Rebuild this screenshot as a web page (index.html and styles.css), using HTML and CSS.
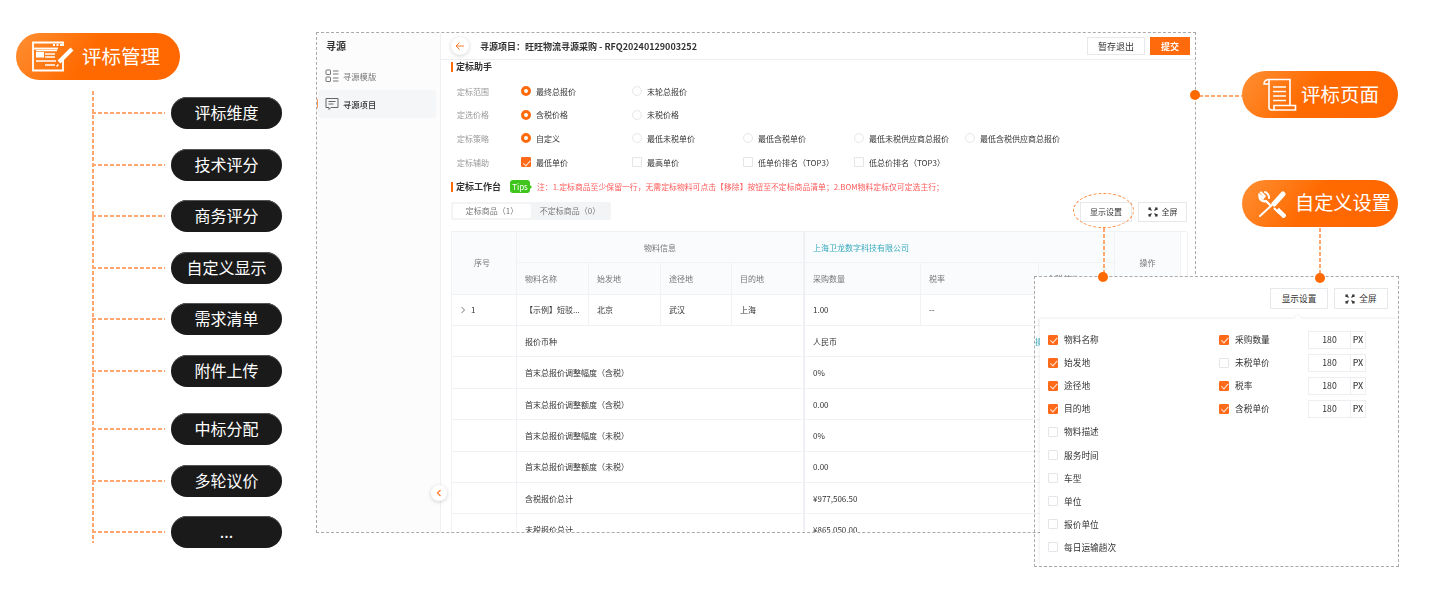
FILE: index.html
```html
<!DOCTYPE html>
<html lang="zh-CN">
<head>
<meta charset="utf-8">
<title>评标管理</title>
<link rel="stylesheet" href="styles.css">
</head>
<body>
<div class="canvas">

  <div class="pill pill-main">
    <svg class="ico-form" viewBox="0 0 44 32" fill="none" stroke="#fff">
      <path d="M31 15V29.500H1V1.500H31V5" stroke-width="1.800"/>
      <path d="M1 7.500H26" stroke-width="1.800"/>
      <path d="M21 4h2M24.500 4h2M28 4h2" stroke-width="1.800"/>
      <rect x="4" y="11" width="8" height="5.500" fill="#fff" stroke="none"/>
      <path d="M4 9.500H25M13 13H23M13 16H23M4 20H24M13 24H23" stroke-width="1.300"/>
      <path d="M27 21 40 8" stroke-width="4"/>
      <path d="M26.500 23.500 24.500 25.500" stroke-width="1.500"/>
    </svg>
    <span class="pill-label">评标管理</span>
  </div>

  <div class="tree">
    <div class="branch"><i class="twig"></i><span class="dark-pill">评标维度</span></div>
    <div class="branch"><i class="twig"></i><span class="dark-pill">技术评分</span></div>
    <div class="branch"><i class="twig"></i><span class="dark-pill">商务评分</span></div>
    <div class="branch"><i class="twig"></i><span class="dark-pill">自定义显示</span></div>
    <div class="branch"><i class="twig"></i><span class="dark-pill">需求清单</span></div>
    <div class="branch"><i class="twig"></i><span class="dark-pill">附件上传</span></div>
    <div class="branch branch-gap"><i class="twig"></i><span class="dark-pill">中标分配</span></div>
    <div class="branch"><i class="twig"></i><span class="dark-pill">多轮议价</span></div>
    <div class="branch"><i class="twig"></i><span class="dark-pill">...</span></div>
  </div>

  <section class="window">
    <aside class="sidebar">
      <h2 class="side-title">寻源</h2>
      <div class="side-item">
        <svg class="side-ico" viewBox="0 0 14 14" fill="none" stroke="#777" stroke-width="1"><rect x="1" y="1" width="4.500" height="4.500" rx=".5"/><rect x="1" y="8" width="4.500" height="4.500" rx=".5"/><path d="M8 2h5.500M8 5h5.500M8 9h5.500M8 12h5.500"/></svg>
        <span>寻源模版</span>
      </div>
      <div class="side-item side-active">
        <svg class="side-ico" viewBox="0 0 14 14" fill="none" stroke="#666" stroke-width="1"><path d="M1 1.500H13V10.500H6L4 12.500V10.500H1Z"/><path d="M3.500 4.500h7M3.500 7h5"/></svg>
        <span>寻源项目</span>
      </div>
    </aside>

    <div class="main">
      <header class="topbar">
        <span class="back"><svg viewBox="0 0 10 10" fill="none" stroke="#ff7a26" stroke-width="1"><path d="M9 5H1M4.500 1.500 1 5l3.500 3.500"/></svg></span>
        <h1 class="title">寻源项目：旺旺物流寻源采购 - RFQ20240129003252</h1>
        <span class="btn btn-save">暂存退出</span>
        <span class="btn btn-submit">提交</span>
      </header>

      <div class="content">
        <h3 class="sec-title">定标助手</h3>
        <div class="form">
          <div class="form-row"><span class="f-label">定标范围</span>
            <span class="opt"><i class="radio on"></i>最终总报价</span>
            <span class="opt"><i class="radio"></i>末轮总报价</span>
          </div>
          <div class="form-row"><span class="f-label">定选价格</span>
            <span class="opt"><i class="radio on"></i>含税价格</span>
            <span class="opt"><i class="radio"></i>未税价格</span>
          </div>
          <div class="form-row"><span class="f-label">定标策略</span>
            <span class="opt"><i class="radio on"></i>自定义</span>
            <span class="opt"><i class="radio"></i>最低未税单价</span>
            <span class="opt"><i class="radio"></i>最低含税单价</span>
            <span class="opt"><i class="radio"></i>最低未税供应商总报价</span>
            <span class="opt"><i class="radio"></i>最低含税供应商总报价</span>
          </div>
          <div class="form-row"><span class="f-label">定标辅助</span>
            <span class="opt"><i class="check on"></i>最低单价</span>
            <span class="opt"><i class="check"></i>最高单价</span>
            <span class="opt"><i class="check"></i>低单价排名（TOP3）</span>
            <span class="opt"><i class="check"></i>低总价排名（TOP3）</span>
          </div>
        </div>

        <div class="bench-head">
          <h3 class="sec-title">定标工作台</h3>
          <span class="tips">Tips</span>
          <span class="note">注：1.定标商品至少保留一行，无需定标物料可点击【移除】按钮至不定标商品清单；2.BOM物料定标仅可定选主行；</span>
        </div>

        <div class="toolbar">
          <div class="tabs"><span class="tab tab-on">定标商品（1）</span><span class="tab">不定标商品（0）</span></div>
          <div class="tools">
            <span class="btn btn-tool">显示设置</span>
            <span class="btn btn-tool btn-full"><svg class="full-ico" viewBox="0 0 10 10" fill="none" stroke="#333" stroke-width="1.100"><path d="M1 3V1H3M7 1H9V3M9 7V9H7M3 9H1V7M1 1 3.500 3.500M9 1 6.500 3.500M9 9 6.500 6.500M1 9 3.500 6.500"/></svg>全屏</span>
          </div>
        </div>

        <div class="grid">
          <div class="c h r2 seq">序号</div>
          <div class="c h cs4 ctr">物料信息</div>
          <div class="c h cs3 teal sup">上海卫龙数字科技有限公司</div>
          <div class="c h r2 ctr op">操作</div>
          <div class="c h blank r2"></div>

          <div class="c h">物料名称</div>
          <div class="c h">始发地</div>
          <div class="c h">途径地</div>
          <div class="c h">目的地</div>
          <div class="c h sup">采购数量</div>
          <div class="c h">税率</div>
          <div class="c h">含税单价</div>

          <div class="c idx"><svg class="chev" viewBox="0 0 6 8" fill="none" stroke="#777"><path d="M1.500 1 4.500 4 1.500 7"/></svg>1</div>
          <div class="c">【示例】短驳...</div>
          <div class="c">北京</div>
          <div class="c">武汉</div>
          <div class="c">上海</div>
          <div class="c sup">1.00</div>
          <div class="c">--</div>
          <div class="c cs3"></div>

          <div class="c"></div><div class="c cs4">报价币种</div><div class="c val sup">人民币<span class="teal link">操作</span></div>
          <div class="c"></div><div class="c cs4">首末总报价调整幅度（含税）</div><div class="c val sup">0%</div>
          <div class="c"></div><div class="c cs4">首末总报价调整额度（含税）</div><div class="c val sup">0.00</div>
          <div class="c"></div><div class="c cs4">首末总报价调整幅度（未税）</div><div class="c val sup">0%</div>
          <div class="c"></div><div class="c cs4">首末总报价调整额度（未税）</div><div class="c val sup">0.00</div>
          <div class="c"></div><div class="c cs4">含税报价总计</div><div class="c val sup">¥977,506.50</div>
          <div class="c"></div><div class="c cs4">未税报价总计</div><div class="c val sup">¥865,050.00</div>
        </div>
      </div>
    </div>
  </section>

  <span class="collapse"><svg viewBox="0 0 6 8" fill="none" stroke="#ff7a26" stroke-width="1.200"><path d="M4.500 1 1.500 4 4.500 7"/></svg></span>

  <span class="callout-ring"></span>
  <i class="link-v link-ring"></i>
  <i class="link-v link-tools"></i>
  <i class="link-h"></i>

  <div class="popup">
    <div class="pop-head">
      <span class="btn btn-pop">显示设置</span>
      <span class="btn btn-pop btn-pop-full"><svg class="full-ico" viewBox="0 0 10 10" fill="none" stroke="#333" stroke-width="1.100"><path d="M1 3V1H3M7 1H9V3M9 7V9H7M3 9H1V7M1 1 3.500 3.500M9 1 6.500 3.500M9 9 6.500 6.500M1 9 3.500 6.500"/></svg>全屏</span>
    </div>
    <div class="panel">
      <div class="pop-col">
        <label class="pop-row"><i class="check on"></i>物料名称</label>
        <label class="pop-row"><i class="check on"></i>始发地</label>
        <label class="pop-row"><i class="check on"></i>途径地</label>
        <label class="pop-row"><i class="check on"></i>目的地</label>
        <label class="pop-row"><i class="check"></i>物料描述</label>
        <label class="pop-row"><i class="check"></i>服务时间</label>
        <label class="pop-row"><i class="check"></i>车型</label>
        <label class="pop-row"><i class="check"></i>单位</label>
        <label class="pop-row"><i class="check"></i>报价单位</label>
        <label class="pop-row"><i class="check"></i>每日运输趟次</label>
      </div>
      <div class="pop-col pop-col-2">
        <div class="pop-row"><i class="check on"></i><span class="pop-name">采购数量</span><span class="num">180</span><span class="unit">PX</span></div>
        <div class="pop-row"><i class="check"></i><span class="pop-name">未税单价</span><span class="num">180</span><span class="unit">PX</span></div>
        <div class="pop-row"><i class="check on"></i><span class="pop-name">税率</span><span class="num">180</span><span class="unit">PX</span></div>
        <div class="pop-row"><i class="check on"></i><span class="pop-name">含税单价</span><span class="num">180</span><span class="unit">PX</span></div>
      </div>
    </div>
  </div>

  <i class="dot dot-page"></i>
  <i class="dot dot-ring"></i>
  <i class="dot dot-tools"></i>

  <div class="pill pill-page">
    <svg class="ico-scroll" viewBox="0 0 34 34" fill="none" stroke="#fff" stroke-width="1.600">
      <path d="M6 1.500H27V27M6 1.500C3 1.500 1 3 1 6H6M6 1.500V29C6 31.500 7 32 8.500 32H32.500V27.500H11V32"/>
      <path d="M10 9H23M10 13.500H23M10 18H23M10 22.500H23" stroke-width="1.700"/>
    </svg>
    <span class="pill-label">评标页面</span>
  </div>

  <div class="pill pill-tools">
    <svg class="ico-tools" viewBox="0 0 28 28" fill="none" stroke="#fff" stroke-linecap="round">
      <path d="M16 14 25 4" stroke-width="5"/>
      <path d="M2 26 14 15" stroke-width="2"/>
      <path d="M3 2.500 6.500 6 5 8 1.500 5C1 9 4 12 8 11L12.500 15.500" stroke-width="2.400"/>
      <path d="M16.500 18.500 21 23" stroke-width="2"/>
      <path d="M21 21 25.500 25.500" stroke-width="4.500" stroke-linecap="square"/>
      <path d="M7 2C9.500 3 11 5 11 8" stroke-width="2"/>
    </svg>
    <span class="pill-label pill-label-tight">自定义设置</span>
  </div>

</div>
</body>
</html>
```

FILE: styles.css
```css
* { box-sizing: border-box; margin: 0; padding: 0; }
html, body { width: 1440px; height: 593px; overflow: hidden; background: #fff; }
body { font-family: "Noto Sans CJK SC", "Noto Sans", sans-serif; color: #333; }
i { display: block; font-style: normal; }

.canvas { position: relative; width: 1440px; height: 593px; overflow: hidden; }

/* orange pills */
.pill {
  position: absolute; display: flex; align-items: center; height: 47px; color: #fff;
  border-radius: 24px;
  background: linear-gradient(125deg, #ff8f33 0%, #ff6a00 45%, #ff6600 100%);
}
.pill-label { font-size: 19.500px; line-height: 1; white-space: nowrap; margin-bottom: 2px; }
.pill-main { left: 16px; top: 33px; width: 164px; padding-left: 16px; }
.ico-form { width: 44px; height: 32px; flex: none; margin-right: -7px; margin-top: 1px; }
.pill-main .pill-label { margin-left: 13px; }
.pill-page { left: 1242px; top: 71px; width: 156px; padding-left: 21px; }
.ico-scroll { width: 34px; height: 34px; flex: none; margin-right: 4px; }
.pill-tools { left: 1242px; top: 180px; width: 156px; padding-left: 16px; }
.ico-tools { width: 28px; height: 28px; flex: none; margin-right: 9px; }
.pill-label-tight { font-size: 19.200px; }

/* left tree */
.tree {
  position: absolute; left: 92px; top: 91px; height: 452px; width: 192px;
  padding-top: 6px; display: flex; flex-direction: column; gap: 19.600px;
}
.tree::before {
  content: ""; position: absolute; left: 0; top: 0; bottom: 0; width: 2px;
  background: repeating-linear-gradient(180deg, #ffa76f 0 4px, transparent 4px 6px);
}
.branch { display: flex; align-items: center; height: 32px; }
.branch-gap { margin-top: 6.400px; }
.twig {
  width: 73px; height: 2px; margin-right: 6px; flex: none;
  background: repeating-linear-gradient(90deg, #ffa76f 0 4px, transparent 4px 6px);
}
.dark-pill {
  width: 111px; height: 32px; border-radius: 16px; background: #1a1a1a; color: #fff;
  box-shadow: inset 0 1px 0 #555;
  font-size: 16px; line-height: 30px; text-align: center;
}

/* main window */
.window {
  position: absolute; left: 316px; top: 32px; width: 880px; height: 501px;
  display: flex; overflow: hidden; background: #fff;
  border: 1px dashed #aaa; filter: blur(.3px);
}
.sidebar { width: 124px; flex: none; background: #fcfcfd; border-right: 1px solid #eef0f3; padding-top: 5px; }
.side-title { font-size: 10px; font-weight: 700; line-height: 15px; padding-left: 9px; color: #333; }
.side-item {
  display: flex; align-items: center; height: 28px; margin: 9px 4px 0 1px; padding-left: 7px;
  font-size: 8.300px; color: #777; border-radius: 3px; position: relative;
}
.side-active { margin-top: 0; background: #f5f6f8; color: #333; font-weight: 500; }
.side-active::before { content: ""; position: absolute; left: -1px; top: 9px; width: 1px; height: 9px; background: #ff9a5a; }
.side-ico { width: 14px; height: 14px; margin-right: 4px; flex: none; }

.main { flex: 1; min-width: 0; }
.topbar { display: flex; align-items: center; height: 27px; padding: 0 5px 0 10px; border-bottom: 1px solid #eceef1; }
.back {
  width: 18px; height: 18px; border-radius: 50%; background: #fff; flex: none;
  box-shadow: 0 1px 4px rgba(0,0,0,.18); display: flex; align-items: center; justify-content: center;
  margin-right: 11px;
}
.back svg { width: 10px; height: 10px; }
.title { flex: 1; font-size: 9px; font-weight: 700; color: #333; white-space: nowrap; }
.btn {
  display: inline-flex; align-items: center; justify-content: center; flex: none;
  border: 1px solid #e7e8ec; background: #fff; color: #333; white-space: nowrap;
}
.btn-save { width: 58px; height: 18px; font-size: 9px; margin-right: 5px; }
.btn-submit { width: 40px; height: 18px; font-size: 9px; background: #ff6a0d; border-color: #ff6a0d; color: #fff; font-weight: 700; }

.content { padding: 1px 8px 0 10px; }
.sec-title {
  font-size: 9px; font-weight: 700; line-height: 12px; color: #333;
  padding-left: 5px; position: relative; white-space: nowrap;
}
.sec-title::before { content: ""; position: absolute; left: 0; top: 1px; width: 2px; height: 10px; background: #ff6a0d; }

.form { margin-top: 6.500px; }
.form-row { display: flex; align-items: center; height: 23.600px; font-size: 8px; color: #333; }
.f-label { width: 70px; padding-left: 6px; color: #999; flex: none; }
.opt { width: 111px; flex: none; display: flex; align-items: center; gap: 5px; white-space: nowrap; }
.radio { width: 10px; height: 10px; border-radius: 50%; border: 1px solid #e6e7eb; background: #fff; flex: none; }
.radio.on { border: 3.500px solid #ff6a0d; }
.check { width: 10px; height: 10px; border: 1px solid #e4e5e9; border-radius: 1px; background: #fff; flex: none; position: relative; }
.check.on { background: #ff6a1a; border-color: #ff6a1a; }
.check.on::after {
  content: ""; position: absolute; left: 2.500px; top: .5px; width: 3px; height: 5.500px;
  border: solid #ffe9da; border-width: 0 1px 1px 0; transform: rotate(42deg);
}

.bench-head { display: flex; align-items: center; height: 26px; }
.tips {
  margin-left: 9px; width: 20px; height: 13px; border-radius: 3px; background: #3fc51c; color: #fff;
  font-size: 8px; line-height: 13px; text-align: center; flex: none; position: relative;
}
.tips::after {
  content: ""; position: absolute; right: -2px; top: 4.500px;
  border-left: 2px solid #3fc51c; border-top: 2px solid transparent; border-bottom: 2px solid transparent;
}
.note { margin-left: 7px; font-size: 7.850px; color: #ff5a5a; white-space: nowrap; }

.toolbar { display: flex; justify-content: space-between; align-items: flex-start; margin-top: 2px; height: 20px; }
.tabs { display: flex; width: 160px; height: 18px; padding: 2px; background: #f3f4f6; border-radius: 2px; font-size: 8px; color: #777; }
.tab { width: 78px; display: flex; align-items: center; justify-content: center; white-space: nowrap; }
.tab-on { background: #fff; border-radius: 2px; }
.tools { display: flex; gap: 6px; }
.btn-tool { width: 52px; height: 20px; font-size: 8px; }
.btn-full { width: 49px; }
.full-ico { width: 10px; height: 10px; margin-right: 4px; flex: none; }

.grid {
  display: grid; margin-top: 9px;
  grid-template-columns: 65px 72px 72px 71px 72px 117px 118px 76px 66px 7px;
  grid-auto-rows: 31.400px;
  font-size: 8px; color: #333; border-top: 1px solid #f1f2f5; border-left: 1px solid #f1f2f5;
}
.c {
  display: flex; align-items: center; padding-left: 8px; white-space: nowrap; overflow: hidden;
  border-right: 1px solid #f1f2f5; border-bottom: 1px solid #f1f2f5; background: #fff;
}
.h { background: #fafbfd; color: #777; }
.r2 { grid-row: span 2; justify-content: center; padding-left: 0; }
.seq { padding-right: 4px; }
.cs4 { grid-column: span 4; }
.cs3 { grid-column: span 3; }
.ctr { justify-content: center; padding-left: 0; }
.sup { border-left: 1px solid #eceef2; }
.val { grid-column: span 5; padding-left: 8px; overflow: visible; }
.teal { color: #35a9bd; }
.link { margin-left: 198px; }
.idx { padding-left: 8px; }
.chev { width: 6px; height: 8px; margin-right: 5px; }
.blank { background: #fff; }
.op { background: #fafbfd; }

.collapse {
  position: absolute; left: 431px; top: 485px; width: 16px; height: 16px; border-radius: 50%;
  background: #fff; box-shadow: 0 1px 4px rgba(0,0,0,.18);
  display: flex; align-items: center; justify-content: center;
}
.collapse svg { width: 6px; height: 8px; }

/* connectors */
.callout-ring {
  position: absolute; left: 1073px; top: 193px; width: 61px; height: 35px; border-radius: 50%;
  border: 1px dashed #ff8a3d;
}
.link-v {
  position: absolute; width: 2px;
  background: repeating-linear-gradient(180deg, #ffa76f 0 4px, transparent 4px 6px);
}
.link-ring { left: 1103px; top: 228px; height: 46px; }
.link-tools { left: 1319px; top: 228px; height: 46px; }
.link-h {
  position: absolute; left: 1199px; top: 95px; width: 43px; height: 2px;
  background: repeating-linear-gradient(90deg, #ffa76f 0 4px, transparent 4px 6px);
}
.dot { position: absolute; width: 10px; height: 10px; border-radius: 50%; background: #ff6a00; }
.dot-page { left: 1190px; top: 90px; }
.dot-ring { left: 1098px; top: 272px; }
.dot-tools { left: 1315px; top: 273px; }

/* popup */
.popup {
  position: absolute; left: 1034px; top: 276px; width: 365px; height: 291px;
  border: 1px dashed #aaa; display: flex; flex-direction: column; filter: blur(.25px);
}
.pop-head { height: 42px; flex: none; background: #fff; display: flex; justify-content: flex-end; gap: 6px; padding: 11px 10px 0 0; }
.btn-pop { width: 58px; height: 21px; font-size: 8.700px; }
.btn-pop-full { width: 54px; }
.panel { flex: 1; margin-left: 5px; display: flex; background: #fff; box-shadow: -1px -1px 3px rgba(0,0,0,.07); padding: 9px 0 0 8px; position: relative; }
.panel::before {
  content: ""; position: absolute; left: 255px; top: -3px; width: 6px; height: 6px; background: #fff;
  transform: rotate(45deg); box-shadow: -1px -1px 1px rgba(0,0,0,.04);
}
.pop-col { width: 171px; flex: none; position: relative; }
.pop-row { display: flex; align-items: center; height: 23.100px; font-size: 8.700px; color: #333; gap: 6px; white-space: nowrap; }
.pop-name { width: 67px; flex: none; }
.num, .unit { height: 18px; display: flex; align-items: center; justify-content: center; border: 1px solid #eceef1; flex: none; }
.num { width: 42px; border-right: 0; }
.unit { width: 16px; margin-left: -6px; font-weight: 500; color: #444; }
```
